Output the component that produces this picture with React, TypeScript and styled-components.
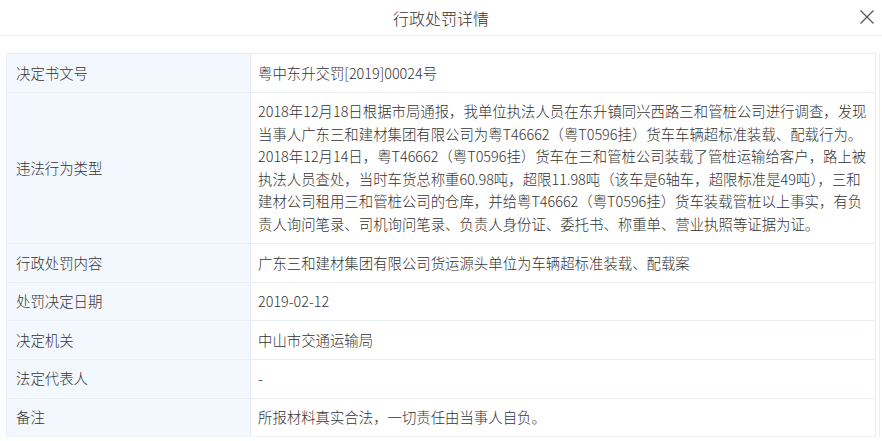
import React from 'react'
import { styled, createGlobalStyle } from 'styled-components'

const rows: { label: string; value: string[] }[] = [
  { label: '决定书文号', value: ['粤中东升交罚[2019]00024号'] },
  {
    label: '违法行为类型',
    value: [
      '2018年12月18日根据市局通报，我单位执法人员在东升镇同兴西路三和管桩公司进行调查，发现',
      '当事人广东三和建材集团有限公司为粤T46662（粤T0596挂）货车车辆超标准装载、配载行为。',
      '2018年12月14日，粤T46662（粤T0596挂）货车在三和管桩公司装载了管桩运输给客户，路上被',
      '执法人员查处，当时车货总称重60.98吨，超限11.98吨（该车是6轴车，超限标准是49吨），三和',
      '建材公司租用三和管桩公司的仓库，并给粤T46662（粤T0596挂）货车装载管桩以上事实，有负',
      '责人询问笔录、司机询问笔录、负责人身份证、委托书、称重单、营业执照等证据为证。',
    ],
  },
  { label: '行政处罚内容', value: ['广东三和建材集团有限公司货运源头单位为车辆超标准装载、配载案'] },
  { label: '处罚决定日期', value: ['2019-02-12'] },
  { label: '决定机关', value: ['中山市交通运输局'] },
  { label: '法定代表人', value: ['-'] },
  { label: '备注', value: ['所报材料真实合法，一切责任由当事人自负。'] },
]

function App() {
  return (
    <>
      <GlobalStyle />
      <Dialog>
        <Header>
          <Title>行政处罚详情</Title>
          <Close aria-label="close">
            <svg width="16" height="16" viewBox="0 0 16 16">
              <path d="M1.5 1.5 L14.5 14.5 M14.5 1.5 L1.5 14.5" stroke="#555" strokeWidth="1.2" fill="none" />
            </svg>
          </Close>
        </Header>
        <Body>
          <Table>
            {rows.map((r, i) => (
              <React.Fragment key={i}>
                <Label $last={i === rows.length - 1}>{r.label}</Label>
                <Value $last={i === rows.length - 1}>
                  {r.value.map((line, j) => (
                    <Line key={j}>{line}</Line>
                  ))}
                </Value>
              </React.Fragment>
            ))}
          </Table>
          <Track />
        </Body>
      </Dialog>
    </>
  )
}

const GlobalStyle = createGlobalStyle`
  body {
    margin: 0;
    background: #ffffff;
    font-family: "Microsoft YaHei", "Noto Sans CJK SC", "Noto Sans", sans-serif;
    color: #333333;
  }
`

const Dialog = styled.div`
  width: 882px;
  height: 441px;
  display: flex;
  flex-direction: column;
  overflow: hidden;
`

const Header = styled.div`
  height: 35px;
  border-bottom: 1px solid #f0f0f0;
  display: flex;
  align-items: center;
  justify-content: center;
  position: relative;
`

const Title = styled.div`
  font-size: 16px;
  font-weight: 300;
  color: #333333;
`

const Close = styled.div`
  position: absolute;
  right: 7px;
  top: 9px;
  width: 16px;
  height: 16px;
  display: flex;
`

const Body = styled.div`
  display: flex;
  padding: 17px 0 0 6px;
`

const Table = styled.div`
  width: 868px;
  display: grid;
  grid-template-columns: 244px 1fr;
  border: 1px solid #e9eef4;
  border-bottom: none;
  font-size: 14.4px;
  font-weight: 300;
  line-height: 22.6px;
`

const Label = styled.div<{ $last?: boolean }>`
  background: #f3f8fe;
  padding: 7.5px 9px;
  border-bottom: 1px solid ${({ $last }) => ($last ? '#f0f3f6' : '#e9eef4')};
  border-right: 1px solid #e9eef4;
  display: flex;
  align-items: center;
  color: #333333;
`

const Value = styled.div<{ $last?: boolean }>`
  padding: 7.5px 7px;
  border-bottom: 1px solid ${({ $last }) => ($last ? '#f0f3f6' : '#e9eef4')};
  color: #333333;
  display: flex;
  flex-direction: column;
  justify-content: center;
`

const Line = styled.div`
  white-space: nowrap;
`

const Track = styled.div`
  width: 1px;
  margin-left: 3px;
  align-self: stretch;
  background: #eef0f2;
`

export default App
